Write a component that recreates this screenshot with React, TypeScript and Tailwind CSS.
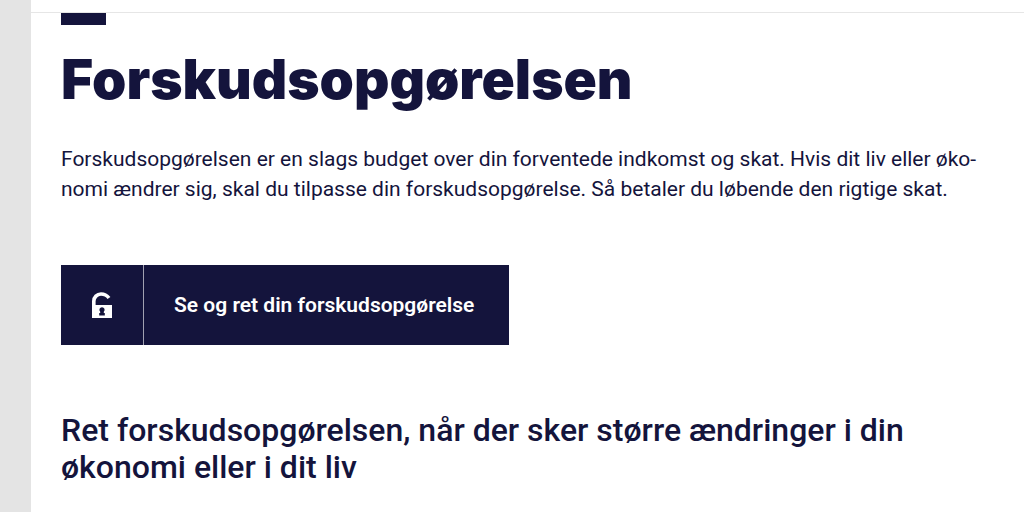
import React from 'react';

const OpenLockIcon = () => (
  <svg viewBox="0 0 20 26" className="w-5 h-[26px]" aria-hidden="true">
    <path d="M1.8 14V9.2A7.2 7.2 0 0 1 9 2C12.5 2 15 3.4 17 6" fill="none" stroke="currentColor" strokeWidth="3.6" />
    <path
      fillRule="evenodd"
      fill="currentColor"
      d="M0 13H20V26H0ZM10 15.2A2.6 2.6 0 0 0 8.2 19.7V21H7.2V23.4H12.8V21H11.8V19.7A2.6 2.6 0 0 0 10 15.2Z"
    />
  </svg>
);

const App = () => {
  return (
    <div className="flex min-h-screen bg-[#e4e4e4] font-['Roboto',sans-serif] text-[#14143c]">
      <main className="ml-[31px] flex-1 bg-white">
        <div className="h-[13px] border-b border-[#e6e6e6]" />
        <div className="pl-[30px] pr-6">
          <div className="h-3 w-[45px] bg-[#14143c]" />
          <h1 className="mt-[22px] font-['Inter',sans-serif] text-[55px] leading-[64px] font-black">
            Forskudsopgørelsen
          </h1>

          <p className="mt-[33px] text-[21px] leading-[30px]">
            Forskudsopgørelsen er en slags budget over din forventede indkomst og skat. Hvis dit liv eller øko-
            <br />
            nomi ændrer sig, skal du tilpasse din forskudsopgørelse. Så betaler du løbende den rigtige skat.
          </p>

          <a href="#forskudsopgoerelse" className="mt-[61px] inline-flex h-20 bg-[#14143c] text-white">
            <span className="flex w-[83px] items-center justify-center border-r border-[#a1a1b1]">
              <OpenLockIcon />
            </span>
            <span className="flex items-center pr-[35px] pl-[30px] pt-px text-[21px] font-semibold">
              Se og ret din forskudsopgørelse
            </span>
          </a>

          <h2 className="mt-[67px] text-[32px] leading-[37px] font-medium">
            Ret forskudsopgørelsen, når der sker større ændringer i din
            <br />
            økonomi eller i dit liv
          </h2>
        </div>
      </main>
    </div>
  );
};

export default App;
